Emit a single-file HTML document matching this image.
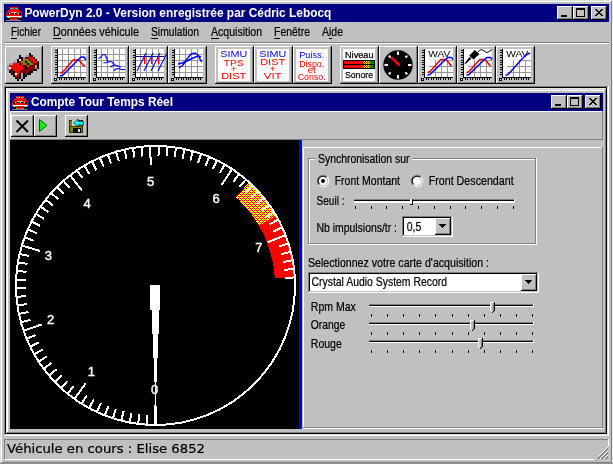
<!DOCTYPE html><html lang="fr"><head><meta charset="utf-8"><title>PowerDyn 2.0 - Compte Tour Temps Réel</title>
<style>html,body{margin:0;padding:0;background:#c0c0c0;overflow:hidden}svg{display:block;will-change:transform}text{white-space:pre}</style></head><body>
<svg width="613" height="464" viewBox="0 0 613 464" font-family="'Liberation Sans', sans-serif">
<defs><pattern id="dith" width="4" height="4" patternUnits="userSpaceOnUse"><rect width="4" height="4" fill="#ffff00"/><rect x="0" y="0" width="1" height="1" fill="#ff0000"/><rect x="2" y="0" width="1" height="1" fill="#ff0000"/><rect x="3" y="1" width="1" height="1" fill="#ff0000"/><rect x="0" y="2" width="1" height="1" fill="#ff0000"/><rect x="2" y="2" width="1" height="1" fill="#ff0000"/><rect x="1" y="3" width="1" height="1" fill="#ff0000"/></pattern><pattern id="dith2" width="2" height="2" patternUnits="userSpaceOnUse"><rect width="2" height="2" fill="#ffff00"/><rect width="1" height="1" fill="#ff0000"/><rect x="1" y="1" width="1" height="1" fill="#ff0000"/></pattern></defs>
<g id="main-window">
<g shape-rendering="crispEdges">
<rect x="0" y="0" width="613" height="464" fill="#c0c0c0"/>
<rect x="0" y="0" width="613" height="1" fill="#dfdfdf"/>
<rect x="0" y="0" width="1" height="464" fill="#dfdfdf"/>
<rect x="1" y="1" width="611" height="1" fill="#ffffff"/>
<rect x="1" y="1" width="1" height="462" fill="#ffffff"/>
<rect x="611" y="1" width="1" height="462" fill="#808080"/>
<rect x="1" y="462" width="611" height="1" fill="#808080"/>
<rect x="612" y="0" width="1" height="464" fill="#e8e8e8"/>
<rect x="0" y="463" width="613" height="1" fill="#909090"/>
<rect x="4" y="4" width="605" height="18" fill="#000080"/>
</g>
<g shape-rendering="crispEdges">
<rect x="10" y="7" width="8" height="1" fill="#ff0000"/>
<rect x="10" y="8" width="4" height="1" fill="#80a0a0"/>
<rect x="14" y="8" width="1" height="1" fill="#008000"/>
<rect x="15" y="8" width="3" height="1" fill="#80a0a0"/>
<rect x="9" y="9" width="10" height="1" fill="#ff0000"/>
<rect x="8" y="10" width="2" height="1" fill="#ff0000"/>
<rect x="10" y="10" width="1" height="1" fill="#c00000"/>
<rect x="11" y="10" width="9" height="1" fill="#ff0000"/>
<rect x="7" y="11" width="2" height="1" fill="#ff0000"/>
<rect x="9" y="11" width="1" height="1" fill="#c00000"/>
<rect x="10" y="11" width="11" height="1" fill="#ff0000"/>
<rect x="7" y="12" width="1" height="1" fill="#ff0000"/>
<rect x="8" y="12" width="1" height="1" fill="#c00000"/>
<rect x="9" y="12" width="2" height="1" fill="#ff0000"/>
<rect x="11" y="12" width="6" height="1" fill="#c0c0c0"/>
<rect x="17" y="12" width="4" height="1" fill="#ff0000"/>
<rect x="6" y="13" width="1" height="1" fill="#ff0000"/>
<rect x="7" y="13" width="2" height="1" fill="#000000"/>
<rect x="9" y="13" width="1" height="1" fill="#ffffff"/>
<rect x="10" y="13" width="1" height="1" fill="#ff0000"/>
<rect x="11" y="13" width="3" height="1" fill="#000000"/>
<rect x="14" y="13" width="1" height="1" fill="#ffffff"/>
<rect x="15" y="13" width="2" height="1" fill="#000000"/>
<rect x="17" y="13" width="1" height="1" fill="#ff0000"/>
<rect x="18" y="13" width="1" height="1" fill="#ffffff"/>
<rect x="19" y="13" width="2" height="1" fill="#000000"/>
<rect x="21" y="13" width="1" height="1" fill="#ff0000"/>
<rect x="6" y="14" width="1" height="1" fill="#ff0000"/>
<rect x="7" y="14" width="2" height="1" fill="#000000"/>
<rect x="9" y="14" width="10" height="1" fill="#ff0000"/>
<rect x="19" y="14" width="2" height="1" fill="#000000"/>
<rect x="21" y="14" width="1" height="1" fill="#ff0000"/>
<rect x="6" y="15" width="16" height="1" fill="#ff0000"/>
<rect x="6" y="16" width="1" height="1" fill="#00c0c0"/>
<rect x="7" y="16" width="14" height="1" fill="#ffffff"/>
<rect x="21" y="16" width="1" height="1" fill="#c0c0c0"/>
<rect x="7" y="17" width="1" height="1" fill="#808080"/>
<rect x="8" y="17" width="1" height="1" fill="#ffff00"/>
<rect x="9" y="17" width="1" height="1" fill="#808080"/>
<rect x="10" y="17" width="1" height="1" fill="#00c0c0"/>
<rect x="11" y="17" width="7" height="1" fill="#ff0000"/>
<rect x="18" y="17" width="1" height="1" fill="#808080"/>
<rect x="19" y="17" width="1" height="1" fill="#ffff00"/>
<rect x="20" y="17" width="2" height="1" fill="#808080"/>
<rect x="7" y="18" width="3" height="1" fill="#000000"/>
<rect x="10" y="18" width="8" height="1" fill="#c00000"/>
<rect x="18" y="18" width="3" height="1" fill="#000000"/>
<rect x="7" y="19" width="3" height="1" fill="#000000"/>
<rect x="10" y="19" width="2" height="1" fill="#808080"/>
<rect x="12" y="19" width="3" height="1" fill="#ff0000"/>
<rect x="15" y="19" width="3" height="1" fill="#808080"/>
<rect x="18" y="19" width="3" height="1" fill="#000000"/>
<rect x="6" y="20" width="15" height="1" fill="#808080"/>
</g>
<text x="24.4" y="16.7" font-size="13" fill="#ffffff" font-weight="bold" textLength="307" lengthAdjust="spacingAndGlyphs">PowerDyn 2.0 - Version enregistrée par Cédric Lebocq</text>
<g shape-rendering="crispEdges">
<rect x="557" y="6" width="16" height="14" fill="#c0c0c0"/>
<rect x="557" y="6" width="15" height="1" fill="#ffffff"/>
<rect x="557" y="6" width="1" height="13" fill="#ffffff"/>
<rect x="557" y="19" width="16" height="1" fill="#000000"/>
<rect x="572" y="6" width="1" height="14" fill="#000000"/>
<rect x="558" y="18" width="14" height="1" fill="#808080"/>
<rect x="571" y="7" width="1" height="12" fill="#808080"/>
<rect x="561" y="15" width="6" height="2" fill="#000000"/>
<rect x="573" y="6" width="16" height="14" fill="#c0c0c0"/>
<rect x="573" y="6" width="15" height="1" fill="#ffffff"/>
<rect x="573" y="6" width="1" height="13" fill="#ffffff"/>
<rect x="573" y="19" width="16" height="1" fill="#000000"/>
<rect x="588" y="6" width="1" height="14" fill="#000000"/>
<rect x="574" y="18" width="14" height="1" fill="#808080"/>
<rect x="587" y="7" width="1" height="12" fill="#808080"/>
<rect x="576" y="8" width="9" height="9" fill="#000000"/>
<rect x="577" y="10" width="7" height="6" fill="#c0c0c0"/>
<rect x="591" y="6" width="16" height="14" fill="#c0c0c0"/>
<rect x="591" y="6" width="15" height="1" fill="#ffffff"/>
<rect x="591" y="6" width="1" height="13" fill="#ffffff"/>
<rect x="591" y="19" width="16" height="1" fill="#000000"/>
<rect x="606" y="6" width="1" height="14" fill="#000000"/>
<rect x="592" y="18" width="14" height="1" fill="#808080"/>
<rect x="605" y="7" width="1" height="12" fill="#808080"/>
<rect x="595" y="9" width="2" height="1" fill="#000000"/>
<rect x="601" y="9" width="2" height="1" fill="#000000"/>
<rect x="596" y="10" width="2" height="1" fill="#000000"/>
<rect x="600" y="10" width="2" height="1" fill="#000000"/>
<rect x="597" y="11" width="2" height="1" fill="#000000"/>
<rect x="599" y="11" width="2" height="1" fill="#000000"/>
<rect x="598" y="12" width="2" height="1" fill="#000000"/>
<rect x="597" y="13" width="2" height="1" fill="#000000"/>
<rect x="599" y="13" width="2" height="1" fill="#000000"/>
<rect x="596" y="14" width="2" height="1" fill="#000000"/>
<rect x="600" y="14" width="2" height="1" fill="#000000"/>
<rect x="595" y="15" width="2" height="1" fill="#000000"/>
<rect x="601" y="15" width="2" height="1" fill="#000000"/>
</g>
<g id="menubar">
<text x="11" y="36" font-size="13" fill="#000" textLength="30" lengthAdjust="spacingAndGlyphs" stroke="#000" stroke-width="0.22">Fichier</text>
<rect x="11" y="38" width="6" height="1" fill="#000" shape-rendering="crispEdges"/>
<text x="53" y="36" font-size="13" fill="#000" textLength="86" lengthAdjust="spacingAndGlyphs" stroke="#000" stroke-width="0.22">Données véhicule</text>
<rect x="53" y="38" width="8" height="1" fill="#000" shape-rendering="crispEdges"/>
<text x="151" y="36" font-size="13" fill="#000" textLength="48" lengthAdjust="spacingAndGlyphs" stroke="#000" stroke-width="0.22">Simulation</text>
<rect x="151" y="38" width="7" height="1" fill="#000" shape-rendering="crispEdges"/>
<text x="211" y="36" font-size="13" fill="#000" textLength="51" lengthAdjust="spacingAndGlyphs" stroke="#000" stroke-width="0.22">Acquisition</text>
<rect x="211" y="38" width="8" height="1" fill="#000" shape-rendering="crispEdges"/>
<text x="274" y="36" font-size="13" fill="#000" textLength="36" lengthAdjust="spacingAndGlyphs" stroke="#000" stroke-width="0.22">Fenêtre</text>
<rect x="274" y="38" width="6" height="1" fill="#000" shape-rendering="crispEdges"/>
<text x="322" y="36" font-size="13" fill="#000" textLength="21" lengthAdjust="spacingAndGlyphs" stroke="#000" stroke-width="0.22">Aide</text>
<rect x="329" y="38" width="3" height="1" fill="#000" shape-rendering="crispEdges"/>
</g>
<g id="toolbar">
<g shape-rendering="crispEdges">
<rect x="4" y="42" width="605" height="1" fill="#808080"/>
<rect x="4" y="43" width="605" height="1" fill="#ffffff"/>
<rect x="5" y="46" width="38" height="38" fill="#c0c0c0"/>
<rect x="5" y="46" width="37" height="1" fill="#ffffff"/>
<rect x="5" y="46" width="1" height="37" fill="#ffffff"/>
<rect x="5" y="83" width="38" height="1" fill="#000000"/>
<rect x="42" y="46" width="1" height="38" fill="#000000"/>
<rect x="6" y="82" width="36" height="1" fill="#808080"/>
<rect x="41" y="47" width="1" height="36" fill="#808080"/>
<rect x="51" y="46" width="39" height="38" fill="#c0c0c0"/>
<rect x="51" y="46" width="38" height="1" fill="#ffffff"/>
<rect x="51" y="46" width="1" height="37" fill="#ffffff"/>
<rect x="51" y="83" width="39" height="1" fill="#000000"/>
<rect x="89" y="46" width="1" height="38" fill="#000000"/>
<rect x="52" y="82" width="37" height="1" fill="#808080"/>
<rect x="88" y="47" width="1" height="36" fill="#808080"/>
<rect x="90" y="46" width="39" height="38" fill="#c0c0c0"/>
<rect x="90" y="46" width="38" height="1" fill="#ffffff"/>
<rect x="90" y="46" width="1" height="37" fill="#ffffff"/>
<rect x="90" y="83" width="39" height="1" fill="#000000"/>
<rect x="128" y="46" width="1" height="38" fill="#000000"/>
<rect x="91" y="82" width="37" height="1" fill="#808080"/>
<rect x="127" y="47" width="1" height="36" fill="#808080"/>
<rect x="129" y="46" width="39" height="38" fill="#c0c0c0"/>
<rect x="129" y="46" width="38" height="1" fill="#ffffff"/>
<rect x="129" y="46" width="1" height="37" fill="#ffffff"/>
<rect x="129" y="83" width="39" height="1" fill="#000000"/>
<rect x="167" y="46" width="1" height="38" fill="#000000"/>
<rect x="130" y="82" width="37" height="1" fill="#808080"/>
<rect x="166" y="47" width="1" height="36" fill="#808080"/>
<rect x="168" y="46" width="39" height="38" fill="#c0c0c0"/>
<rect x="168" y="46" width="38" height="1" fill="#ffffff"/>
<rect x="168" y="46" width="1" height="37" fill="#ffffff"/>
<rect x="168" y="83" width="39" height="1" fill="#000000"/>
<rect x="206" y="46" width="1" height="38" fill="#000000"/>
<rect x="169" y="82" width="37" height="1" fill="#808080"/>
<rect x="205" y="47" width="1" height="36" fill="#808080"/>
<rect x="215" y="46" width="39" height="38" fill="#c0c0c0"/>
<rect x="215" y="46" width="38" height="1" fill="#ffffff"/>
<rect x="215" y="46" width="1" height="37" fill="#ffffff"/>
<rect x="215" y="83" width="39" height="1" fill="#000000"/>
<rect x="253" y="46" width="1" height="38" fill="#000000"/>
<rect x="216" y="82" width="37" height="1" fill="#808080"/>
<rect x="252" y="47" width="1" height="36" fill="#808080"/>
<rect x="254" y="46" width="39" height="38" fill="#c0c0c0"/>
<rect x="254" y="46" width="38" height="1" fill="#ffffff"/>
<rect x="254" y="46" width="1" height="37" fill="#ffffff"/>
<rect x="254" y="83" width="39" height="1" fill="#000000"/>
<rect x="292" y="46" width="1" height="38" fill="#000000"/>
<rect x="255" y="82" width="37" height="1" fill="#808080"/>
<rect x="291" y="47" width="1" height="36" fill="#808080"/>
<rect x="293" y="46" width="39" height="38" fill="#c0c0c0"/>
<rect x="293" y="46" width="38" height="1" fill="#ffffff"/>
<rect x="293" y="46" width="1" height="37" fill="#ffffff"/>
<rect x="293" y="83" width="39" height="1" fill="#000000"/>
<rect x="331" y="46" width="1" height="38" fill="#000000"/>
<rect x="294" y="82" width="37" height="1" fill="#808080"/>
<rect x="330" y="47" width="1" height="36" fill="#808080"/>
<rect x="340" y="46" width="39" height="38" fill="#c0c0c0"/>
<rect x="340" y="46" width="38" height="1" fill="#ffffff"/>
<rect x="340" y="46" width="1" height="37" fill="#ffffff"/>
<rect x="340" y="83" width="39" height="1" fill="#000000"/>
<rect x="378" y="46" width="1" height="38" fill="#000000"/>
<rect x="341" y="82" width="37" height="1" fill="#808080"/>
<rect x="377" y="47" width="1" height="36" fill="#808080"/>
<rect x="379" y="46" width="39" height="38" fill="#c0c0c0"/>
<rect x="379" y="46" width="38" height="1" fill="#ffffff"/>
<rect x="379" y="46" width="1" height="37" fill="#ffffff"/>
<rect x="379" y="83" width="39" height="1" fill="#000000"/>
<rect x="417" y="46" width="1" height="38" fill="#000000"/>
<rect x="380" y="82" width="37" height="1" fill="#808080"/>
<rect x="416" y="47" width="1" height="36" fill="#808080"/>
<rect x="418" y="46" width="39" height="38" fill="#c0c0c0"/>
<rect x="418" y="46" width="38" height="1" fill="#ffffff"/>
<rect x="418" y="46" width="1" height="37" fill="#ffffff"/>
<rect x="418" y="83" width="39" height="1" fill="#000000"/>
<rect x="456" y="46" width="1" height="38" fill="#000000"/>
<rect x="419" y="82" width="37" height="1" fill="#808080"/>
<rect x="455" y="47" width="1" height="36" fill="#808080"/>
<rect x="457" y="46" width="39" height="38" fill="#c0c0c0"/>
<rect x="457" y="46" width="38" height="1" fill="#ffffff"/>
<rect x="457" y="46" width="1" height="37" fill="#ffffff"/>
<rect x="457" y="83" width="39" height="1" fill="#000000"/>
<rect x="495" y="46" width="1" height="38" fill="#000000"/>
<rect x="458" y="82" width="37" height="1" fill="#808080"/>
<rect x="494" y="47" width="1" height="36" fill="#808080"/>
<rect x="496" y="46" width="39" height="38" fill="#c0c0c0"/>
<rect x="496" y="46" width="38" height="1" fill="#ffffff"/>
<rect x="496" y="46" width="1" height="37" fill="#ffffff"/>
<rect x="496" y="83" width="39" height="1" fill="#000000"/>
<rect x="534" y="46" width="1" height="38" fill="#000000"/>
<rect x="497" y="82" width="37" height="1" fill="#808080"/>
<rect x="533" y="47" width="1" height="36" fill="#808080"/>
</g>
<g shape-rendering="crispEdges">
<rect x="29" y="53" width="2" height="2" fill="#000000"/>
<rect x="19" y="55" width="2" height="2" fill="#000000"/>
<rect x="25" y="55" width="4" height="2" fill="#a0a0a0"/>
<rect x="29" y="55" width="2" height="2" fill="#800000"/>
<rect x="31" y="55" width="2" height="2" fill="#000000"/>
<rect x="19" y="57" width="4" height="2" fill="#000000"/>
<rect x="23" y="57" width="2" height="2" fill="#a0a0a0"/>
<rect x="25" y="57" width="4" height="2" fill="#800000"/>
<rect x="29" y="57" width="4" height="2" fill="#ff0000"/>
<rect x="33" y="57" width="2" height="2" fill="#000000"/>
<rect x="17" y="59" width="2" height="2" fill="#000000"/>
<rect x="19" y="59" width="2" height="2" fill="#ffffff"/>
<rect x="21" y="59" width="2" height="2" fill="#800000"/>
<rect x="23" y="59" width="6" height="2" fill="#808000"/>
<rect x="29" y="59" width="2" height="2" fill="#800000"/>
<rect x="31" y="59" width="4" height="2" fill="#ff0000"/>
<rect x="35" y="59" width="2" height="2" fill="#000000"/>
<rect x="13" y="61" width="4" height="2" fill="#a0a0a0"/>
<rect x="17" y="61" width="2" height="2" fill="#000000"/>
<rect x="19" y="61" width="2" height="2" fill="#800000"/>
<rect x="21" y="61" width="4" height="2" fill="#808000"/>
<rect x="25" y="61" width="2" height="2" fill="#000000"/>
<rect x="27" y="61" width="4" height="2" fill="#808000"/>
<rect x="31" y="61" width="2" height="2" fill="#800000"/>
<rect x="33" y="61" width="4" height="2" fill="#ff0000"/>
<rect x="37" y="61" width="2" height="2" fill="#000000"/>
<rect x="9" y="63" width="4" height="2" fill="#a0a0a0"/>
<rect x="13" y="63" width="6" height="2" fill="#ff0000"/>
<rect x="19" y="63" width="2" height="2" fill="#000000"/>
<rect x="21" y="63" width="2" height="2" fill="#ff0000"/>
<rect x="23" y="63" width="4" height="2" fill="#808000"/>
<rect x="27" y="63" width="2" height="2" fill="#000000"/>
<rect x="29" y="63" width="4" height="2" fill="#808000"/>
<rect x="33" y="63" width="4" height="2" fill="#800000"/>
<rect x="37" y="63" width="2" height="2" fill="#000000"/>
<rect x="7" y="65" width="2" height="2" fill="#a0a0a0"/>
<rect x="9" y="65" width="14" height="2" fill="#ff0000"/>
<rect x="23" y="65" width="2" height="2" fill="#000000"/>
<rect x="25" y="65" width="2" height="2" fill="#800000"/>
<rect x="27" y="65" width="2" height="2" fill="#808000"/>
<rect x="29" y="65" width="6" height="2" fill="#800000"/>
<rect x="35" y="65" width="2" height="2" fill="#a0a0a0"/>
<rect x="37" y="65" width="2" height="2" fill="#000000"/>
<rect x="7" y="67" width="2" height="2" fill="#a0a0a0"/>
<rect x="9" y="67" width="2" height="2" fill="#ffffff"/>
<rect x="11" y="67" width="12" height="2" fill="#ff0000"/>
<rect x="23" y="67" width="2" height="2" fill="#800000"/>
<rect x="25" y="67" width="2" height="2" fill="#000000"/>
<rect x="27" y="67" width="8" height="2" fill="#800000"/>
<rect x="35" y="67" width="2" height="2" fill="#a0a0a0"/>
<rect x="37" y="67" width="2" height="2" fill="#000000"/>
<rect x="7" y="69" width="2" height="2" fill="#a0a0a0"/>
<rect x="9" y="69" width="2" height="2" fill="#ff0000"/>
<rect x="11" y="69" width="2" height="2" fill="#000000"/>
<rect x="13" y="69" width="8" height="2" fill="#ff0000"/>
<rect x="21" y="69" width="12" height="2" fill="#800000"/>
<rect x="33" y="69" width="4" height="2" fill="#000000"/>
<rect x="9" y="71" width="2" height="2" fill="#000000"/>
<rect x="11" y="71" width="2" height="2" fill="#800000"/>
<rect x="13" y="71" width="2" height="2" fill="#000000"/>
<rect x="15" y="71" width="4" height="2" fill="#ff0000"/>
<rect x="19" y="71" width="10" height="2" fill="#800000"/>
<rect x="29" y="71" width="4" height="2" fill="#000000"/>
<rect x="11" y="73" width="2" height="2" fill="#000000"/>
<rect x="13" y="73" width="2" height="2" fill="#800000"/>
<rect x="15" y="73" width="2" height="2" fill="#ffffff"/>
<rect x="17" y="73" width="2" height="2" fill="#ff0000"/>
<rect x="19" y="73" width="2" height="2" fill="#000000"/>
<rect x="21" y="73" width="2" height="2" fill="#a0a0a0"/>
<rect x="23" y="73" width="2" height="2" fill="#000000"/>
<rect x="25" y="73" width="2" height="2" fill="#800000"/>
<rect x="27" y="73" width="4" height="2" fill="#000000"/>
<rect x="13" y="75" width="2" height="2" fill="#000000"/>
<rect x="15" y="75" width="2" height="2" fill="#ff0000"/>
<rect x="17" y="75" width="2" height="2" fill="#800000"/>
<rect x="19" y="75" width="2" height="2" fill="#000000"/>
<rect x="21" y="75" width="2" height="2" fill="#a0a0a0"/>
<rect x="23" y="75" width="4" height="2" fill="#000000"/>
<rect x="15" y="77" width="2" height="2" fill="#000000"/>
<rect x="17" y="77" width="2" height="2" fill="#800000"/>
<rect x="19" y="77" width="2" height="2" fill="#000000"/>
<rect x="21" y="77" width="2" height="2" fill="#a0a0a0"/>
<rect x="23" y="77" width="2" height="2" fill="#000000"/>
<rect x="17" y="79" width="2" height="2" fill="#000000"/>
<rect x="21" y="79" width="2" height="2" fill="#000000"/>
</g>
<g shape-rendering="crispEdges">
<rect x="58" y="49" width="28" height="28" fill="#ffffff"/>
<rect x="62" y="49" width="1" height="28" fill="#989898"/>
<rect x="68" y="49" width="1" height="28" fill="#989898"/>
<rect x="74" y="49" width="1" height="28" fill="#989898"/>
<rect x="80" y="49" width="1" height="28" fill="#989898"/>
<rect x="58" y="54" width="28" height="1" fill="#989898"/>
<rect x="58" y="60" width="28" height="1" fill="#989898"/>
<rect x="58" y="66" width="28" height="1" fill="#989898"/>
<rect x="58" y="72" width="28" height="1" fill="#989898"/>
<rect x="57" y="49" width="1" height="29" fill="#000000"/>
<rect x="57" y="77" width="29" height="1" fill="#000000"/>
<rect x="55" y="50" width="2" height="1" fill="#000000"/>
<rect x="55" y="52" width="2" height="1" fill="#000000"/>
<rect x="55" y="55" width="2" height="1" fill="#000000"/>
<rect x="55" y="57" width="2" height="1" fill="#000000"/>
<rect x="55" y="60" width="2" height="1" fill="#000000"/>
<rect x="55" y="62" width="2" height="1" fill="#000000"/>
<rect x="55" y="64" width="2" height="1" fill="#000000"/>
<rect x="55" y="67" width="2" height="1" fill="#000000"/>
<rect x="55" y="69" width="2" height="1" fill="#000000"/>
<rect x="55" y="72" width="2" height="1" fill="#000000"/>
<rect x="55" y="74" width="2" height="1" fill="#000000"/>
<rect x="59" y="78" width="1" height="2" fill="#000000"/>
<rect x="61" y="78" width="1" height="2" fill="#000000"/>
<rect x="64" y="78" width="1" height="2" fill="#000000"/>
<rect x="66" y="78" width="1" height="2" fill="#000000"/>
<rect x="69" y="78" width="1" height="2" fill="#000000"/>
<rect x="71" y="78" width="1" height="2" fill="#000000"/>
<rect x="73" y="78" width="1" height="2" fill="#000000"/>
<rect x="76" y="78" width="1" height="2" fill="#000000"/>
<rect x="78" y="78" width="1" height="2" fill="#000000"/>
<rect x="81" y="78" width="1" height="2" fill="#000000"/>
<rect x="83" y="78" width="1" height="2" fill="#000000"/>
<rect x="54" y="78" width="3" height="3" fill="#000000"/>
<rect x="55" y="79" width="1" height="1" fill="#ffffff"/>
</g>
<polyline points="60,73 63,72 73,60 79,60 83,65 85,66" fill="none" stroke="#ff0000" stroke-width="1.5" stroke-linejoin="round"/>
<polyline points="60,76 63,75 78,60 81,57 84,57 86,60" fill="none" stroke="#0000ff" stroke-width="1.5" stroke-linejoin="round"/>
<g shape-rendering="crispEdges">
<rect x="97" y="49" width="28" height="28" fill="#ffffff"/>
<rect x="101" y="49" width="1" height="28" fill="#989898"/>
<rect x="107" y="49" width="1" height="28" fill="#989898"/>
<rect x="113" y="49" width="1" height="28" fill="#989898"/>
<rect x="119" y="49" width="1" height="28" fill="#989898"/>
<rect x="97" y="54" width="28" height="1" fill="#989898"/>
<rect x="97" y="60" width="28" height="1" fill="#989898"/>
<rect x="97" y="66" width="28" height="1" fill="#989898"/>
<rect x="97" y="72" width="28" height="1" fill="#989898"/>
<rect x="96" y="49" width="1" height="29" fill="#000000"/>
<rect x="96" y="77" width="29" height="1" fill="#000000"/>
<rect x="94" y="50" width="2" height="1" fill="#000000"/>
<rect x="94" y="52" width="2" height="1" fill="#000000"/>
<rect x="94" y="55" width="2" height="1" fill="#000000"/>
<rect x="94" y="57" width="2" height="1" fill="#000000"/>
<rect x="94" y="60" width="2" height="1" fill="#000000"/>
<rect x="94" y="62" width="2" height="1" fill="#000000"/>
<rect x="94" y="64" width="2" height="1" fill="#000000"/>
<rect x="94" y="67" width="2" height="1" fill="#000000"/>
<rect x="94" y="69" width="2" height="1" fill="#000000"/>
<rect x="94" y="72" width="2" height="1" fill="#000000"/>
<rect x="94" y="74" width="2" height="1" fill="#000000"/>
<rect x="98" y="78" width="1" height="2" fill="#000000"/>
<rect x="100" y="78" width="1" height="2" fill="#000000"/>
<rect x="103" y="78" width="1" height="2" fill="#000000"/>
<rect x="105" y="78" width="1" height="2" fill="#000000"/>
<rect x="108" y="78" width="1" height="2" fill="#000000"/>
<rect x="110" y="78" width="1" height="2" fill="#000000"/>
<rect x="112" y="78" width="1" height="2" fill="#000000"/>
<rect x="115" y="78" width="1" height="2" fill="#000000"/>
<rect x="117" y="78" width="1" height="2" fill="#000000"/>
<rect x="120" y="78" width="1" height="2" fill="#000000"/>
<rect x="122" y="78" width="1" height="2" fill="#000000"/>
<rect x="93" y="78" width="3" height="3" fill="#000000"/>
<rect x="94" y="79" width="1" height="1" fill="#ffffff"/>
</g>
<polyline points="98.5,58.5 101,57 103,54.5 105,54.5 107,59 107.5,62" fill="none" stroke="#0000ff" stroke-width="1.2" stroke-linejoin="round"/>
<polyline points="103.5,63 107,62.5 110,61.5 112,62 114,64 115,64.5" fill="none" stroke="#0000ff" stroke-width="1.2" stroke-linejoin="round"/>
<polyline points="110,67 112,66 114,65 117,65.5 119,66.5 121,67" fill="none" stroke="#0000ff" stroke-width="1.2" stroke-linejoin="round"/>
<polyline points="114,70.5 116,69 119,68.5 121,69.5 125,69.5" fill="none" stroke="#0000ff" stroke-width="1.2" stroke-linejoin="round"/>
<g shape-rendering="crispEdges">
<rect x="136" y="49" width="28" height="28" fill="#ffffff"/>
<rect x="140" y="49" width="1" height="28" fill="#989898"/>
<rect x="146" y="49" width="1" height="28" fill="#989898"/>
<rect x="152" y="49" width="1" height="28" fill="#989898"/>
<rect x="158" y="49" width="1" height="28" fill="#989898"/>
<rect x="136" y="54" width="28" height="1" fill="#989898"/>
<rect x="136" y="60" width="28" height="1" fill="#989898"/>
<rect x="136" y="66" width="28" height="1" fill="#989898"/>
<rect x="136" y="72" width="28" height="1" fill="#989898"/>
<rect x="135" y="49" width="1" height="29" fill="#000000"/>
<rect x="135" y="77" width="29" height="1" fill="#000000"/>
<rect x="133" y="50" width="2" height="1" fill="#000000"/>
<rect x="133" y="52" width="2" height="1" fill="#000000"/>
<rect x="133" y="55" width="2" height="1" fill="#000000"/>
<rect x="133" y="57" width="2" height="1" fill="#000000"/>
<rect x="133" y="60" width="2" height="1" fill="#000000"/>
<rect x="133" y="62" width="2" height="1" fill="#000000"/>
<rect x="133" y="64" width="2" height="1" fill="#000000"/>
<rect x="133" y="67" width="2" height="1" fill="#000000"/>
<rect x="133" y="69" width="2" height="1" fill="#000000"/>
<rect x="133" y="72" width="2" height="1" fill="#000000"/>
<rect x="133" y="74" width="2" height="1" fill="#000000"/>
<rect x="137" y="78" width="1" height="2" fill="#000000"/>
<rect x="139" y="78" width="1" height="2" fill="#000000"/>
<rect x="142" y="78" width="1" height="2" fill="#000000"/>
<rect x="144" y="78" width="1" height="2" fill="#000000"/>
<rect x="147" y="78" width="1" height="2" fill="#000000"/>
<rect x="149" y="78" width="1" height="2" fill="#000000"/>
<rect x="151" y="78" width="1" height="2" fill="#000000"/>
<rect x="154" y="78" width="1" height="2" fill="#000000"/>
<rect x="156" y="78" width="1" height="2" fill="#000000"/>
<rect x="159" y="78" width="1" height="2" fill="#000000"/>
<rect x="161" y="78" width="1" height="2" fill="#000000"/>
<rect x="132" y="78" width="3" height="3" fill="#000000"/>
<rect x="133" y="79" width="1" height="1" fill="#ffffff"/>
</g>
<rect x="136" y="56" width="28" height="1" fill="#000080" shape-rendering="crispEdges"/>
<polyline points="137,71 146,53" fill="none" stroke="#0000ff" stroke-width="1.1" stroke-linejoin="round"/>
<polyline points="144,71 153,53" fill="none" stroke="#0000ff" stroke-width="1.1" stroke-linejoin="round"/>
<polyline points="151,71 160,53" fill="none" stroke="#0000ff" stroke-width="1.1" stroke-linejoin="round"/>
<polyline points="158,71 167,53" fill="none" stroke="#0000ff" stroke-width="1.1" stroke-linejoin="round"/>
<rect x="144" y="57" width="1.5" height="7" fill="#ff0000"/>
<rect x="151" y="57" width="1.5" height="7" fill="#ff0000"/>
<rect x="158" y="57" width="1.5" height="7" fill="#ff0000"/>
<g shape-rendering="crispEdges">
<rect x="175" y="49" width="28" height="28" fill="#ffffff"/>
<rect x="179" y="49" width="1" height="28" fill="#989898"/>
<rect x="185" y="49" width="1" height="28" fill="#989898"/>
<rect x="191" y="49" width="1" height="28" fill="#989898"/>
<rect x="197" y="49" width="1" height="28" fill="#989898"/>
<rect x="175" y="54" width="28" height="1" fill="#989898"/>
<rect x="175" y="60" width="28" height="1" fill="#989898"/>
<rect x="175" y="66" width="28" height="1" fill="#989898"/>
<rect x="175" y="72" width="28" height="1" fill="#989898"/>
<rect x="174" y="49" width="1" height="29" fill="#000000"/>
<rect x="174" y="77" width="29" height="1" fill="#000000"/>
<rect x="172" y="50" width="2" height="1" fill="#000000"/>
<rect x="172" y="52" width="2" height="1" fill="#000000"/>
<rect x="172" y="55" width="2" height="1" fill="#000000"/>
<rect x="172" y="57" width="2" height="1" fill="#000000"/>
<rect x="172" y="60" width="2" height="1" fill="#000000"/>
<rect x="172" y="62" width="2" height="1" fill="#000000"/>
<rect x="172" y="64" width="2" height="1" fill="#000000"/>
<rect x="172" y="67" width="2" height="1" fill="#000000"/>
<rect x="172" y="69" width="2" height="1" fill="#000000"/>
<rect x="172" y="72" width="2" height="1" fill="#000000"/>
<rect x="172" y="74" width="2" height="1" fill="#000000"/>
<rect x="176" y="78" width="1" height="2" fill="#000000"/>
<rect x="178" y="78" width="1" height="2" fill="#000000"/>
<rect x="181" y="78" width="1" height="2" fill="#000000"/>
<rect x="183" y="78" width="1" height="2" fill="#000000"/>
<rect x="186" y="78" width="1" height="2" fill="#000000"/>
<rect x="188" y="78" width="1" height="2" fill="#000000"/>
<rect x="190" y="78" width="1" height="2" fill="#000000"/>
<rect x="193" y="78" width="1" height="2" fill="#000000"/>
<rect x="195" y="78" width="1" height="2" fill="#000000"/>
<rect x="198" y="78" width="1" height="2" fill="#000000"/>
<rect x="200" y="78" width="1" height="2" fill="#000000"/>
<rect x="171" y="78" width="3" height="3" fill="#000000"/>
<rect x="172" y="79" width="1" height="1" fill="#ffffff"/>
</g>
<polyline points="179,68 183,65 187,59 191,54 195,53 198,55 201,61 202,62" fill="none" stroke="#0000ff" stroke-width="1.4" stroke-linejoin="round"/>
<polyline points="178,64 182,63 187,61 193,58 198,56 201,57" fill="none" stroke="#0000ff" stroke-width="1.4" stroke-linejoin="round"/>
<rect x="218" y="49" width="32" height="32" fill="#ffffff" shape-rendering="crispEdges"/>
<text x="220.2" y="57" font-size="9.8" fill="#0000ff" textLength="27" lengthAdjust="spacingAndGlyphs">SIMU</text>
<text x="223.7" y="65.5" font-size="9.8" fill="#ff0000" textLength="20" lengthAdjust="spacingAndGlyphs">TPS</text>
<text x="230.7" y="72" font-size="9.8" fill="#ff0000" textLength="6" lengthAdjust="spacingAndGlyphs">+</text>
<text x="221.2" y="79" font-size="9.8" fill="#ff0000" textLength="25" lengthAdjust="spacingAndGlyphs">DIST</text>
<rect x="257" y="49" width="32" height="32" fill="#ffffff" shape-rendering="crispEdges"/>
<text x="259.2" y="57" font-size="9.8" fill="#0000ff" textLength="27" lengthAdjust="spacingAndGlyphs">SIMU</text>
<text x="260.2" y="64.5" font-size="9.8" fill="#ff0000" textLength="25" lengthAdjust="spacingAndGlyphs">DIST</text>
<text x="269.7" y="72" font-size="9.8" fill="#ff0000" textLength="6" lengthAdjust="spacingAndGlyphs">+</text>
<text x="263.7" y="79" font-size="9.8" fill="#ff0000" textLength="18" lengthAdjust="spacingAndGlyphs">VIT</text>
<rect x="296" y="49" width="32" height="32" fill="#ffffff" shape-rendering="crispEdges"/>
<text x="299.2" y="57.5" font-size="9.8" fill="#0000ff" textLength="25" lengthAdjust="spacingAndGlyphs">Puiss.</text>
<text x="299.2" y="66.5" font-size="9.8" fill="#ff0000" textLength="25" lengthAdjust="spacingAndGlyphs">Dispo.</text>
<text x="307.7" y="72.5" font-size="9.8" fill="#ff0000" textLength="8" lengthAdjust="spacingAndGlyphs">et</text>
<text x="297.7" y="79.5" font-size="9.8" fill="#ff0000" textLength="28" lengthAdjust="spacingAndGlyphs">Conso.</text>
<g shape-rendering="crispEdges">
<rect x="343" y="49" width="32" height="32" fill="#ffffff"/>
<rect x="343" y="60" width="32" height="9" fill="#000000"/>
<rect x="344" y="61" width="19" height="3" fill="#ff0000"/>
<rect x="344" y="65" width="19" height="3" fill="#ff0000"/>
<rect x="363" y="61" width="7" height="3" fill="url(#dith2)"/>
<rect x="363" y="65" width="7" height="3" fill="url(#dith2)"/>
<rect x="370" y="61" width="4" height="3" fill="#008000"/>
<rect x="370" y="65" width="4" height="3" fill="#008000"/>
</g>
<text x="345" y="57.5" font-size="9.5" fill="#000" textLength="28.5" lengthAdjust="spacingAndGlyphs" stroke="#000" stroke-width="0.25">Niveau</text>
<text x="345" y="77.5" font-size="9.5" fill="#000" textLength="28" lengthAdjust="spacingAndGlyphs" stroke="#000" stroke-width="0.25">Sonore</text>
<circle cx="398" cy="65" r="14.7" fill="#000"/>
<line x1="398.0" y1="55.0" x2="398.0" y2="51.5" stroke="#fff" stroke-width="2"/>
<line x1="405.4" y1="57.6" x2="407.2" y2="55.8" stroke="#fff" stroke-width="2"/>
<line x1="408.0" y1="65.0" x2="411.5" y2="65.0" stroke="#fff" stroke-width="2"/>
<line x1="405.4" y1="72.4" x2="407.2" y2="74.2" stroke="#fff" stroke-width="2"/>
<line x1="398.0" y1="75.0" x2="398.0" y2="78.5" stroke="#fff" stroke-width="2"/>
<line x1="390.6" y1="72.4" x2="388.8" y2="74.2" stroke="#fff" stroke-width="2"/>
<line x1="388.0" y1="65.0" x2="384.5" y2="65.0" stroke="#fff" stroke-width="2"/>
<line x1="390.6" y1="57.6" x2="388.8" y2="55.8" stroke="#fff" stroke-width="2"/>
<line x1="399.5" y1="65.5" x2="391.5" y2="57.5" stroke="#ff0000" stroke-width="2.5"/>
<g shape-rendering="crispEdges">
<rect x="425" y="49" width="28" height="28" fill="#ffffff"/>
<rect x="435" y="60" width="1" height="17" fill="#989898"/>
<rect x="441" y="60" width="1" height="17" fill="#989898"/>
<rect x="447" y="60" width="1" height="17" fill="#989898"/>
<rect x="429" y="66" width="24" height="1" fill="#989898"/>
<rect x="429" y="72" width="24" height="1" fill="#989898"/>
<rect x="441" y="60" width="12" height="1" fill="#989898"/>
<rect x="424" y="49" width="1" height="29" fill="#000000"/>
<rect x="424" y="77" width="29" height="1" fill="#000000"/>
<rect x="422" y="50" width="2" height="1" fill="#000000"/>
<rect x="422" y="52" width="2" height="1" fill="#000000"/>
<rect x="422" y="55" width="2" height="1" fill="#000000"/>
<rect x="422" y="57" width="2" height="1" fill="#000000"/>
<rect x="422" y="60" width="2" height="1" fill="#000000"/>
<rect x="422" y="62" width="2" height="1" fill="#000000"/>
<rect x="422" y="64" width="2" height="1" fill="#000000"/>
<rect x="422" y="67" width="2" height="1" fill="#000000"/>
<rect x="422" y="69" width="2" height="1" fill="#000000"/>
<rect x="422" y="72" width="2" height="1" fill="#000000"/>
<rect x="422" y="74" width="2" height="1" fill="#000000"/>
<rect x="426" y="78" width="1" height="2" fill="#000000"/>
<rect x="428" y="78" width="1" height="2" fill="#000000"/>
<rect x="431" y="78" width="1" height="2" fill="#000000"/>
<rect x="433" y="78" width="1" height="2" fill="#000000"/>
<rect x="436" y="78" width="1" height="2" fill="#000000"/>
<rect x="438" y="78" width="1" height="2" fill="#000000"/>
<rect x="440" y="78" width="1" height="2" fill="#000000"/>
<rect x="443" y="78" width="1" height="2" fill="#000000"/>
<rect x="445" y="78" width="1" height="2" fill="#000000"/>
<rect x="448" y="78" width="1" height="2" fill="#000000"/>
<rect x="450" y="78" width="1" height="2" fill="#000000"/>
<rect x="421" y="78" width="3" height="3" fill="#000000"/>
<rect x="422" y="79" width="1" height="1" fill="#ffffff"/>
</g>
<text x="428.3" y="56.7" font-size="9.5" fill="#000" textLength="22" lengthAdjust="spacingAndGlyphs">WAV</text>
<polyline points="427.4,72.7 430,71.5 440.7,59.4 446,59.4 449,63 451.4,66" fill="none" stroke="#ff0000" stroke-width="1.5" stroke-linejoin="round"/>
<polyline points="427.4,75.4 430,74.5 445,60 448,57.4 451.4,57.4 453,59.5" fill="none" stroke="#0000ff" stroke-width="1.5" stroke-linejoin="round"/>
<g shape-rendering="crispEdges">
<rect x="464" y="49" width="28" height="28" fill="#ffffff"/>
<rect x="474" y="60" width="1" height="17" fill="#989898"/>
<rect x="480" y="60" width="1" height="17" fill="#989898"/>
<rect x="486" y="60" width="1" height="17" fill="#989898"/>
<rect x="468" y="66" width="24" height="1" fill="#989898"/>
<rect x="468" y="72" width="24" height="1" fill="#989898"/>
<rect x="480" y="60" width="12" height="1" fill="#989898"/>
<rect x="463" y="49" width="1" height="29" fill="#000000"/>
<rect x="463" y="77" width="29" height="1" fill="#000000"/>
<rect x="461" y="50" width="2" height="1" fill="#000000"/>
<rect x="461" y="52" width="2" height="1" fill="#000000"/>
<rect x="461" y="55" width="2" height="1" fill="#000000"/>
<rect x="461" y="57" width="2" height="1" fill="#000000"/>
<rect x="461" y="60" width="2" height="1" fill="#000000"/>
<rect x="461" y="62" width="2" height="1" fill="#000000"/>
<rect x="461" y="64" width="2" height="1" fill="#000000"/>
<rect x="461" y="67" width="2" height="1" fill="#000000"/>
<rect x="461" y="69" width="2" height="1" fill="#000000"/>
<rect x="461" y="72" width="2" height="1" fill="#000000"/>
<rect x="461" y="74" width="2" height="1" fill="#000000"/>
<rect x="465" y="78" width="1" height="2" fill="#000000"/>
<rect x="467" y="78" width="1" height="2" fill="#000000"/>
<rect x="470" y="78" width="1" height="2" fill="#000000"/>
<rect x="472" y="78" width="1" height="2" fill="#000000"/>
<rect x="475" y="78" width="1" height="2" fill="#000000"/>
<rect x="477" y="78" width="1" height="2" fill="#000000"/>
<rect x="479" y="78" width="1" height="2" fill="#000000"/>
<rect x="482" y="78" width="1" height="2" fill="#000000"/>
<rect x="484" y="78" width="1" height="2" fill="#000000"/>
<rect x="487" y="78" width="1" height="2" fill="#000000"/>
<rect x="489" y="78" width="1" height="2" fill="#000000"/>
<rect x="460" y="78" width="3" height="3" fill="#000000"/>
<rect x="461" y="79" width="1" height="1" fill="#ffffff"/>
</g>
<g transform="translate(460,49)"><polygon points="14.8,1 19.5,5 13.5,10.4 9.2,6.8" fill="#000"/><polygon points="9.5,8 11.5,9.5 5.5,15 4.5,14.5" fill="#000"/><path d="M18 3 q3 -4 6 -1 t5 0.5 l3 -2" fill="none" stroke="#000" stroke-width="1"/></g>
<polyline points="466.4,72.7 469,71.5 479.7,59.4 485,59.4 488,63 490.4,66" fill="none" stroke="#ff0000" stroke-width="1.5" stroke-linejoin="round"/>
<polyline points="466.4,75.4 469,74.5 484,60 487,57.4 490.4,57.4 492,59.5" fill="none" stroke="#0000ff" stroke-width="1.5" stroke-linejoin="round"/>
<g shape-rendering="crispEdges">
<rect x="503" y="49" width="28" height="28" fill="#ffffff"/>
<rect x="513" y="60" width="1" height="17" fill="#989898"/>
<rect x="519" y="60" width="1" height="17" fill="#989898"/>
<rect x="525" y="60" width="1" height="17" fill="#989898"/>
<rect x="507" y="66" width="24" height="1" fill="#989898"/>
<rect x="507" y="72" width="24" height="1" fill="#989898"/>
<rect x="519" y="60" width="12" height="1" fill="#989898"/>
<rect x="502" y="49" width="1" height="29" fill="#000000"/>
<rect x="502" y="77" width="29" height="1" fill="#000000"/>
<rect x="500" y="50" width="2" height="1" fill="#000000"/>
<rect x="500" y="52" width="2" height="1" fill="#000000"/>
<rect x="500" y="55" width="2" height="1" fill="#000000"/>
<rect x="500" y="57" width="2" height="1" fill="#000000"/>
<rect x="500" y="60" width="2" height="1" fill="#000000"/>
<rect x="500" y="62" width="2" height="1" fill="#000000"/>
<rect x="500" y="64" width="2" height="1" fill="#000000"/>
<rect x="500" y="67" width="2" height="1" fill="#000000"/>
<rect x="500" y="69" width="2" height="1" fill="#000000"/>
<rect x="500" y="72" width="2" height="1" fill="#000000"/>
<rect x="500" y="74" width="2" height="1" fill="#000000"/>
<rect x="504" y="78" width="1" height="2" fill="#000000"/>
<rect x="506" y="78" width="1" height="2" fill="#000000"/>
<rect x="509" y="78" width="1" height="2" fill="#000000"/>
<rect x="511" y="78" width="1" height="2" fill="#000000"/>
<rect x="514" y="78" width="1" height="2" fill="#000000"/>
<rect x="516" y="78" width="1" height="2" fill="#000000"/>
<rect x="518" y="78" width="1" height="2" fill="#000000"/>
<rect x="521" y="78" width="1" height="2" fill="#000000"/>
<rect x="523" y="78" width="1" height="2" fill="#000000"/>
<rect x="526" y="78" width="1" height="2" fill="#000000"/>
<rect x="528" y="78" width="1" height="2" fill="#000000"/>
<rect x="499" y="78" width="3" height="3" fill="#000000"/>
<rect x="500" y="79" width="1" height="1" fill="#ffffff"/>
</g>
<text x="506.3" y="56.7" font-size="9.5" fill="#000" textLength="22" lengthAdjust="spacingAndGlyphs">WAV</text>
<polyline points="505.4,75.4 508,74.5 513,69 521,60 526,55 530,53" fill="none" stroke="#0000ff" stroke-width="1.5" stroke-linejoin="round"/>
</g>
</g>
<g id="mdi-client">
<g shape-rendering="crispEdges">
<rect x="4" y="86" width="605" height="1" fill="#808080"/>
<rect x="4" y="86" width="1" height="350" fill="#808080"/>
<rect x="5" y="87" width="603" height="1" fill="#000000"/>
<rect x="5" y="87" width="1" height="348" fill="#000000"/>
<rect x="5" y="434" width="604" height="1" fill="#dfdfdf"/>
<rect x="607" y="87" width="1" height="348" fill="#dfdfdf"/>
<rect x="4" y="435" width="605" height="1" fill="#ffffff"/>
<rect x="608" y="86" width="1" height="350" fill="#ffffff"/>
<rect x="6" y="88" width="601" height="346" fill="#c0c0c0"/>
<rect x="6" y="88" width="600" height="1" fill="#e8e8e8"/>
<rect x="6" y="89" width="600" height="1" fill="#d8d8d8"/>
<rect x="7" y="90" width="598" height="1" fill="#ffffff"/>
<rect x="6" y="88" width="1" height="345" fill="#e8e8e8"/>
<rect x="7" y="90" width="1" height="342" fill="#ffffff"/>
<rect x="606" y="88" width="1" height="346" fill="#000000"/>
<rect x="6" y="433" width="601" height="1" fill="#000000"/>
<rect x="605" y="89" width="1" height="344" fill="#808080"/>
<rect x="7" y="432" width="599" height="1" fill="#808080"/>
<rect x="10" y="93" width="593" height="18" fill="#000080"/>
</g>
<g shape-rendering="crispEdges">
<rect x="16" y="96" width="8" height="1" fill="#ff0000"/>
<rect x="16" y="97" width="4" height="1" fill="#80a0a0"/>
<rect x="20" y="97" width="1" height="1" fill="#008000"/>
<rect x="21" y="97" width="3" height="1" fill="#80a0a0"/>
<rect x="15" y="98" width="10" height="1" fill="#ff0000"/>
<rect x="14" y="99" width="2" height="1" fill="#ff0000"/>
<rect x="16" y="99" width="1" height="1" fill="#c00000"/>
<rect x="17" y="99" width="9" height="1" fill="#ff0000"/>
<rect x="13" y="100" width="2" height="1" fill="#ff0000"/>
<rect x="15" y="100" width="1" height="1" fill="#c00000"/>
<rect x="16" y="100" width="11" height="1" fill="#ff0000"/>
<rect x="13" y="101" width="1" height="1" fill="#ff0000"/>
<rect x="14" y="101" width="1" height="1" fill="#c00000"/>
<rect x="15" y="101" width="2" height="1" fill="#ff0000"/>
<rect x="17" y="101" width="6" height="1" fill="#c0c0c0"/>
<rect x="23" y="101" width="4" height="1" fill="#ff0000"/>
<rect x="12" y="102" width="1" height="1" fill="#ff0000"/>
<rect x="13" y="102" width="2" height="1" fill="#000000"/>
<rect x="15" y="102" width="1" height="1" fill="#ffffff"/>
<rect x="16" y="102" width="1" height="1" fill="#ff0000"/>
<rect x="17" y="102" width="3" height="1" fill="#000000"/>
<rect x="20" y="102" width="1" height="1" fill="#ffffff"/>
<rect x="21" y="102" width="2" height="1" fill="#000000"/>
<rect x="23" y="102" width="1" height="1" fill="#ff0000"/>
<rect x="24" y="102" width="1" height="1" fill="#ffffff"/>
<rect x="25" y="102" width="2" height="1" fill="#000000"/>
<rect x="27" y="102" width="1" height="1" fill="#ff0000"/>
<rect x="12" y="103" width="1" height="1" fill="#ff0000"/>
<rect x="13" y="103" width="2" height="1" fill="#000000"/>
<rect x="15" y="103" width="10" height="1" fill="#ff0000"/>
<rect x="25" y="103" width="2" height="1" fill="#000000"/>
<rect x="27" y="103" width="1" height="1" fill="#ff0000"/>
<rect x="12" y="104" width="16" height="1" fill="#ff0000"/>
<rect x="12" y="105" width="1" height="1" fill="#00c0c0"/>
<rect x="13" y="105" width="14" height="1" fill="#ffffff"/>
<rect x="27" y="105" width="1" height="1" fill="#c0c0c0"/>
<rect x="13" y="106" width="1" height="1" fill="#808080"/>
<rect x="14" y="106" width="1" height="1" fill="#ffff00"/>
<rect x="15" y="106" width="1" height="1" fill="#808080"/>
<rect x="16" y="106" width="1" height="1" fill="#00c0c0"/>
<rect x="17" y="106" width="7" height="1" fill="#ff0000"/>
<rect x="24" y="106" width="1" height="1" fill="#808080"/>
<rect x="25" y="106" width="1" height="1" fill="#ffff00"/>
<rect x="26" y="106" width="2" height="1" fill="#808080"/>
<rect x="13" y="107" width="3" height="1" fill="#000000"/>
<rect x="16" y="107" width="8" height="1" fill="#c00000"/>
<rect x="24" y="107" width="3" height="1" fill="#000000"/>
<rect x="13" y="108" width="3" height="1" fill="#000000"/>
<rect x="16" y="108" width="2" height="1" fill="#808080"/>
<rect x="18" y="108" width="3" height="1" fill="#ff0000"/>
<rect x="21" y="108" width="3" height="1" fill="#808080"/>
<rect x="24" y="108" width="3" height="1" fill="#000000"/>
<rect x="12" y="109" width="15" height="1" fill="#808080"/>
</g>
<text x="31" y="106" font-size="13" fill="#ffffff" font-weight="bold" textLength="142" lengthAdjust="spacingAndGlyphs">Compte Tour Temps Réel</text>
<g shape-rendering="crispEdges">
<rect x="551" y="95" width="16" height="14" fill="#c0c0c0"/>
<rect x="551" y="95" width="15" height="1" fill="#ffffff"/>
<rect x="551" y="95" width="1" height="13" fill="#ffffff"/>
<rect x="551" y="108" width="16" height="1" fill="#000000"/>
<rect x="566" y="95" width="1" height="14" fill="#000000"/>
<rect x="552" y="107" width="14" height="1" fill="#808080"/>
<rect x="565" y="96" width="1" height="12" fill="#808080"/>
<rect x="555" y="104" width="6" height="2" fill="#000000"/>
<rect x="567" y="95" width="16" height="14" fill="#c0c0c0"/>
<rect x="567" y="95" width="15" height="1" fill="#ffffff"/>
<rect x="567" y="95" width="1" height="13" fill="#ffffff"/>
<rect x="567" y="108" width="16" height="1" fill="#000000"/>
<rect x="582" y="95" width="1" height="14" fill="#000000"/>
<rect x="568" y="107" width="14" height="1" fill="#808080"/>
<rect x="581" y="96" width="1" height="12" fill="#808080"/>
<rect x="570" y="97" width="9" height="9" fill="#000000"/>
<rect x="571" y="99" width="7" height="6" fill="#c0c0c0"/>
<rect x="585" y="95" width="16" height="14" fill="#c0c0c0"/>
<rect x="585" y="95" width="15" height="1" fill="#ffffff"/>
<rect x="585" y="95" width="1" height="13" fill="#ffffff"/>
<rect x="585" y="108" width="16" height="1" fill="#000000"/>
<rect x="600" y="95" width="1" height="14" fill="#000000"/>
<rect x="586" y="107" width="14" height="1" fill="#808080"/>
<rect x="599" y="96" width="1" height="12" fill="#808080"/>
<rect x="589" y="98" width="2" height="1" fill="#000000"/>
<rect x="595" y="98" width="2" height="1" fill="#000000"/>
<rect x="590" y="99" width="2" height="1" fill="#000000"/>
<rect x="594" y="99" width="2" height="1" fill="#000000"/>
<rect x="591" y="100" width="2" height="1" fill="#000000"/>
<rect x="593" y="100" width="2" height="1" fill="#000000"/>
<rect x="592" y="101" width="2" height="1" fill="#000000"/>
<rect x="591" y="102" width="2" height="1" fill="#000000"/>
<rect x="593" y="102" width="2" height="1" fill="#000000"/>
<rect x="590" y="103" width="2" height="1" fill="#000000"/>
<rect x="594" y="103" width="2" height="1" fill="#000000"/>
<rect x="589" y="104" width="2" height="1" fill="#000000"/>
<rect x="595" y="104" width="2" height="1" fill="#000000"/>
<rect x="10" y="111" width="592" height="1" fill="#ffffff"/>
<rect x="10" y="111" width="1" height="28" fill="#ffffff"/>
<rect x="10" y="139" width="593" height="1" fill="#808080"/>
<rect x="602" y="111" width="1" height="29" fill="#808080"/>
<rect x="602" y="147" width="1" height="281" fill="#808080"/>
<rect x="11" y="115" width="23" height="22" fill="#c0c0c0"/>
<rect x="11" y="115" width="22" height="1" fill="#ffffff"/>
<rect x="11" y="115" width="1" height="21" fill="#ffffff"/>
<rect x="11" y="136" width="23" height="1" fill="#000000"/>
<rect x="33" y="115" width="1" height="22" fill="#000000"/>
<rect x="12" y="135" width="21" height="1" fill="#808080"/>
<rect x="32" y="116" width="1" height="20" fill="#808080"/>
<rect x="34" y="115" width="23" height="22" fill="#c0c0c0"/>
<rect x="34" y="115" width="22" height="1" fill="#ffffff"/>
<rect x="34" y="115" width="1" height="21" fill="#ffffff"/>
<rect x="34" y="136" width="23" height="1" fill="#000000"/>
<rect x="56" y="115" width="1" height="22" fill="#000000"/>
<rect x="35" y="135" width="21" height="1" fill="#808080"/>
<rect x="55" y="116" width="1" height="20" fill="#808080"/>
<rect x="65" y="115" width="23" height="22" fill="#c0c0c0"/>
<rect x="65" y="115" width="22" height="1" fill="#ffffff"/>
<rect x="65" y="115" width="1" height="21" fill="#ffffff"/>
<rect x="65" y="136" width="23" height="1" fill="#000000"/>
<rect x="87" y="115" width="1" height="22" fill="#000000"/>
<rect x="66" y="135" width="21" height="1" fill="#808080"/>
<rect x="86" y="116" width="1" height="20" fill="#808080"/>
</g>
<path d="M16.5 120.5 L28 132 M28 120.5 L16.5 132" stroke="#000" stroke-width="2" fill="none"/>
<polygon points="39.5,119.5 39.5,131.5 47,125.5" fill="#00ff00" stroke="#006000" stroke-width="1"/>
<g shape-rendering="crispEdges">
<rect x="69" y="120" width="14" height="13" fill="#303000"/>
<rect x="70" y="121" width="12" height="11" fill="#808000"/>
<rect x="72" y="120" width="6" height="6" fill="#d0d0d0"/>
<rect x="70" y="126" width="12" height="1" fill="#404000"/>
<rect x="73" y="128" width="8" height="5" fill="#000"/>
<rect x="78" y="129" width="2" height="3" fill="#e0e0e0"/>
</g>
<polygon points="73.5,123 78,119 78,121.3 83.5,121.3 83.5,125 78,125 78,127" fill="#00ffff" stroke="#000" stroke-width="0.6"/>
<g shape-rendering="crispEdges">
<rect x="10" y="140" width="289" height="289" fill="#000000"/>
<rect x="299" y="140" width="3" height="289" fill="#0000ff"/>
<rect x="303" y="147" width="299" height="1" fill="#ffffff"/>
<rect x="303" y="147" width="1" height="280" fill="#ffffff"/>
<rect x="303" y="427" width="300" height="1" fill="#808080"/>
<rect x="303" y="428" width="300" height="1" fill="#ffffff"/>
</g>
<g id="gauge">
<polygon points="248.9,182.6 250.2,183.8 251.5,185.0 252.8,186.3 254.1,187.5 255.4,188.8 256.6,190.1 257.8,191.4 259.0,192.8 260.2,194.1 261.4,195.5 262.5,196.8 263.7,198.2 264.8,199.6 265.9,201.1 267.0,202.5 268.1,203.9 269.1,205.4 270.1,206.9 271.1,208.4 272.1,209.9 273.1,211.4 274.0,212.9 275.0,214.4 275.9,216.0 259.0,225.7 258.2,224.4 257.4,223.1 256.6,221.8 255.8,220.5 254.9,219.2 254.0,217.9 253.2,216.6 252.3,215.4 251.3,214.1 250.4,212.9 249.5,211.7 248.5,210.5 247.5,209.3 246.5,208.1 245.5,206.9 244.5,205.8 243.5,204.6 242.4,203.5 241.3,202.4 240.3,201.3 239.2,200.2 238.1,199.1 236.9,198.0 235.8,197.0" fill="url(#dith)" shape-rendering="crispEdges"/>
<polygon points="275.9,216.0 277.2,218.3 278.5,220.7 279.7,223.1 280.9,225.5 282.0,228.0 283.1,230.4 284.2,232.9 285.2,235.4 286.1,238.0 287.0,240.5 287.9,243.1 288.7,245.6 289.4,248.2 290.1,250.8 290.8,253.4 291.3,256.1 291.9,258.7 292.4,261.4 292.8,264.0 293.2,266.7 293.6,269.4 293.8,272.0 294.1,274.7 294.3,277.4 274.8,278.5 274.6,276.2 274.4,273.9 274.2,271.6 273.9,269.3 273.6,267.0 273.2,264.7 272.8,262.5 272.3,260.2 271.8,257.9 271.2,255.7 270.6,253.4 270.0,251.2 269.3,249.0 268.6,246.8 267.8,244.6 267.0,242.5 266.1,240.3 265.2,238.2 264.3,236.0 263.3,233.9 262.3,231.9 261.2,229.8 260.1,227.8 259.0,225.7" fill="#ff0000" shape-rendering="crispEdges"/>
<circle cx="155.5" cy="285.5" r="139.5" fill="none" stroke="#fff" stroke-width="2" shape-rendering="crispEdges"/>
<line x1="155.5" y1="405.7" x2="155.5" y2="425.0" stroke="#fff" stroke-width="2" shape-rendering="crispEdges"/>
<line x1="147.5" y1="415.0" x2="146.8" y2="424.7" stroke="#fff" stroke-width="2" shape-rendering="crispEdges"/>
<line x1="139.4" y1="414.2" x2="138.2" y2="423.9" stroke="#fff" stroke-width="2" shape-rendering="crispEdges"/>
<line x1="131.5" y1="413.0" x2="129.7" y2="422.6" stroke="#fff" stroke-width="2" shape-rendering="crispEdges"/>
<line x1="123.6" y1="411.2" x2="121.2" y2="420.7" stroke="#fff" stroke-width="2" shape-rendering="crispEdges"/>
<line x1="115.9" y1="409.0" x2="112.9" y2="418.3" stroke="#fff" stroke-width="2" shape-rendering="crispEdges"/>
<line x1="108.3" y1="406.3" x2="104.8" y2="415.4" stroke="#fff" stroke-width="2" shape-rendering="crispEdges"/>
<line x1="100.9" y1="403.2" x2="96.8" y2="412.0" stroke="#fff" stroke-width="2" shape-rendering="crispEdges"/>
<line x1="93.7" y1="399.5" x2="89.1" y2="408.2" stroke="#fff" stroke-width="2" shape-rendering="crispEdges"/>
<line x1="86.8" y1="395.5" x2="81.6" y2="403.8" stroke="#fff" stroke-width="2" shape-rendering="crispEdges"/>
<line x1="85.6" y1="383.3" x2="74.4" y2="399.0" stroke="#fff" stroke-width="2" shape-rendering="crispEdges"/>
<line x1="73.7" y1="386.1" x2="67.5" y2="393.7" stroke="#fff" stroke-width="2" shape-rendering="crispEdges"/>
<line x1="67.6" y1="380.9" x2="61.0" y2="388.1" stroke="#fff" stroke-width="2" shape-rendering="crispEdges"/>
<line x1="61.9" y1="375.2" x2="54.8" y2="382.0" stroke="#fff" stroke-width="2" shape-rendering="crispEdges"/>
<line x1="56.5" y1="369.3" x2="49.0" y2="375.6" stroke="#fff" stroke-width="2" shape-rendering="crispEdges"/>
<line x1="51.5" y1="363.0" x2="43.6" y2="368.8" stroke="#fff" stroke-width="2" shape-rendering="crispEdges"/>
<line x1="46.9" y1="356.4" x2="38.7" y2="361.7" stroke="#fff" stroke-width="2" shape-rendering="crispEdges"/>
<line x1="42.7" y1="349.5" x2="34.2" y2="354.3" stroke="#fff" stroke-width="2" shape-rendering="crispEdges"/>
<line x1="38.9" y1="342.4" x2="30.1" y2="346.7" stroke="#fff" stroke-width="2" shape-rendering="crispEdges"/>
<line x1="35.6" y1="335.0" x2="26.6" y2="338.8" stroke="#fff" stroke-width="2" shape-rendering="crispEdges"/>
<line x1="41.8" y1="324.4" x2="23.5" y2="330.7" stroke="#fff" stroke-width="2" shape-rendering="crispEdges"/>
<line x1="30.4" y1="319.8" x2="21.0" y2="322.4" stroke="#fff" stroke-width="2" shape-rendering="crispEdges"/>
<line x1="28.5" y1="312.0" x2="18.9" y2="314.0" stroke="#fff" stroke-width="2" shape-rendering="crispEdges"/>
<line x1="27.1" y1="304.1" x2="17.4" y2="305.5" stroke="#fff" stroke-width="2" shape-rendering="crispEdges"/>
<line x1="26.2" y1="296.1" x2="16.5" y2="296.9" stroke="#fff" stroke-width="2" shape-rendering="crispEdges"/>
<line x1="25.8" y1="288.0" x2="16.0" y2="288.2" stroke="#fff" stroke-width="2" shape-rendering="crispEdges"/>
<line x1="25.9" y1="280.0" x2="16.1" y2="279.6" stroke="#fff" stroke-width="2" shape-rendering="crispEdges"/>
<line x1="26.5" y1="271.9" x2="16.8" y2="270.9" stroke="#fff" stroke-width="2" shape-rendering="crispEdges"/>
<line x1="27.6" y1="264.0" x2="17.9" y2="262.3" stroke="#fff" stroke-width="2" shape-rendering="crispEdges"/>
<line x1="29.2" y1="256.1" x2="19.6" y2="253.9" stroke="#fff" stroke-width="2" shape-rendering="crispEdges"/>
<line x1="40.3" y1="251.0" x2="21.9" y2="245.5" stroke="#fff" stroke-width="2" shape-rendering="crispEdges"/>
<line x1="33.8" y1="240.7" x2="24.6" y2="237.3" stroke="#fff" stroke-width="2" shape-rendering="crispEdges"/>
<line x1="36.8" y1="233.2" x2="27.8" y2="229.3" stroke="#fff" stroke-width="2" shape-rendering="crispEdges"/>
<line x1="40.3" y1="225.9" x2="31.6" y2="221.5" stroke="#fff" stroke-width="2" shape-rendering="crispEdges"/>
<line x1="44.2" y1="218.9" x2="35.8" y2="213.9" stroke="#fff" stroke-width="2" shape-rendering="crispEdges"/>
<line x1="48.5" y1="212.1" x2="40.5" y2="206.6" stroke="#fff" stroke-width="2" shape-rendering="crispEdges"/>
<line x1="53.3" y1="205.7" x2="45.6" y2="199.6" stroke="#fff" stroke-width="2" shape-rendering="crispEdges"/>
<line x1="58.4" y1="199.5" x2="51.1" y2="193.0" stroke="#fff" stroke-width="2" shape-rendering="crispEdges"/>
<line x1="64.0" y1="193.6" x2="57.0" y2="186.7" stroke="#fff" stroke-width="2" shape-rendering="crispEdges"/>
<line x1="69.8" y1="188.1" x2="63.4" y2="180.8" stroke="#fff" stroke-width="2" shape-rendering="crispEdges"/>
<line x1="81.9" y1="190.5" x2="70.0" y2="175.2" stroke="#fff" stroke-width="2" shape-rendering="crispEdges"/>
<line x1="82.6" y1="178.3" x2="77.0" y2="170.2" stroke="#fff" stroke-width="2" shape-rendering="crispEdges"/>
<line x1="89.3" y1="173.9" x2="84.3" y2="165.5" stroke="#fff" stroke-width="2" shape-rendering="crispEdges"/>
<line x1="96.4" y1="170.1" x2="91.9" y2="161.3" stroke="#fff" stroke-width="2" shape-rendering="crispEdges"/>
<line x1="103.7" y1="166.6" x2="99.7" y2="157.6" stroke="#fff" stroke-width="2" shape-rendering="crispEdges"/>
<line x1="111.1" y1="163.6" x2="107.8" y2="154.4" stroke="#fff" stroke-width="2" shape-rendering="crispEdges"/>
<line x1="118.8" y1="161.1" x2="116.0" y2="151.7" stroke="#fff" stroke-width="2" shape-rendering="crispEdges"/>
<line x1="126.6" y1="159.1" x2="124.4" y2="149.5" stroke="#fff" stroke-width="2" shape-rendering="crispEdges"/>
<line x1="134.5" y1="157.5" x2="132.9" y2="147.8" stroke="#fff" stroke-width="2" shape-rendering="crispEdges"/>
<line x1="142.4" y1="156.5" x2="141.4" y2="146.7" stroke="#fff" stroke-width="2" shape-rendering="crispEdges"/>
<line x1="150.8" y1="165.4" x2="150.1" y2="146.1" stroke="#fff" stroke-width="2" shape-rendering="crispEdges"/>
<line x1="158.5" y1="155.8" x2="158.7" y2="146.0" stroke="#fff" stroke-width="2" shape-rendering="crispEdges"/>
<line x1="166.5" y1="156.3" x2="167.4" y2="146.5" stroke="#fff" stroke-width="2" shape-rendering="crispEdges"/>
<line x1="174.5" y1="157.2" x2="176.0" y2="147.5" stroke="#fff" stroke-width="2" shape-rendering="crispEdges"/>
<line x1="182.5" y1="158.6" x2="184.5" y2="149.0" stroke="#fff" stroke-width="2" shape-rendering="crispEdges"/>
<line x1="190.3" y1="160.5" x2="192.9" y2="151.1" stroke="#fff" stroke-width="2" shape-rendering="crispEdges"/>
<line x1="198.0" y1="162.9" x2="201.2" y2="153.7" stroke="#fff" stroke-width="2" shape-rendering="crispEdges"/>
<line x1="205.5" y1="165.8" x2="209.3" y2="156.8" stroke="#fff" stroke-width="2" shape-rendering="crispEdges"/>
<line x1="212.8" y1="169.1" x2="217.1" y2="160.4" stroke="#fff" stroke-width="2" shape-rendering="crispEdges"/>
<line x1="219.9" y1="172.9" x2="224.8" y2="164.4" stroke="#fff" stroke-width="2" shape-rendering="crispEdges"/>
<line x1="221.5" y1="185.1" x2="232.1" y2="168.9" stroke="#fff" stroke-width="2" shape-rendering="crispEdges"/>
<line x1="233.3" y1="181.8" x2="239.2" y2="173.9" stroke="#fff" stroke-width="2" shape-rendering="crispEdges"/>
<line x1="239.6" y1="186.8" x2="246.0" y2="179.3" stroke="#fff" stroke-width="2" shape-rendering="crispEdges"/>
<line x1="245.6" y1="192.2" x2="252.4" y2="185.1" stroke="#fff" stroke-width="2" shape-rendering="crispEdges"/>
<line x1="251.2" y1="198.0" x2="258.4" y2="191.3" stroke="#fff" stroke-width="2" shape-rendering="crispEdges"/>
<line x1="256.4" y1="204.1" x2="264.1" y2="197.9" stroke="#fff" stroke-width="2" shape-rendering="crispEdges"/>
<line x1="261.3" y1="210.5" x2="269.3" y2="204.8" stroke="#fff" stroke-width="2" shape-rendering="crispEdges"/>
<line x1="265.8" y1="217.2" x2="274.1" y2="212.0" stroke="#fff" stroke-width="2" shape-rendering="crispEdges"/>
<line x1="269.8" y1="224.2" x2="278.4" y2="219.5" stroke="#fff" stroke-width="2" shape-rendering="crispEdges"/>
<line x1="273.4" y1="231.4" x2="282.3" y2="227.3" stroke="#fff" stroke-width="2" shape-rendering="crispEdges"/>
<line x1="267.6" y1="242.2" x2="285.6" y2="235.2" stroke="#fff" stroke-width="2" shape-rendering="crispEdges"/>
<line x1="279.2" y1="246.4" x2="288.5" y2="243.4" stroke="#fff" stroke-width="2" shape-rendering="crispEdges"/>
<line x1="281.3" y1="254.1" x2="290.9" y2="251.7" stroke="#fff" stroke-width="2" shape-rendering="crispEdges"/>
<line x1="283.0" y1="262.0" x2="292.7" y2="260.2" stroke="#fff" stroke-width="2" shape-rendering="crispEdges"/>
<line x1="284.3" y1="269.9" x2="294.0" y2="268.8" stroke="#fff" stroke-width="2" shape-rendering="crispEdges"/>
<line x1="285.0" y1="277.9" x2="294.8" y2="277.4" stroke="#fff" stroke-width="2" shape-rendering="crispEdges"/>
<polygon points="150,285 160,285 160,310 159,310 159,334 158,334 158,358 157,358 157,382 156,382 156,425 154,425 154,405 155,405 155,382 154,382 154,358 153,358 153,334 152,334 152,310 150,310" fill="#fff" shape-rendering="crispEdges"/>
<text x="154.5" y="393.6" font-size="13" fill="#ffffff" text-anchor="middle" stroke="#fff" stroke-width="0.4">0</text>
<text x="91.4" y="375.6" font-size="13" fill="#ffffff" text-anchor="middle" stroke="#fff" stroke-width="0.4">1</text>
<text x="50.6" y="324.3" font-size="13" fill="#ffffff" text-anchor="middle" stroke="#fff" stroke-width="0.4">2</text>
<text x="48.3" y="259.90000000000003" font-size="13" fill="#ffffff" text-anchor="middle" stroke="#fff" stroke-width="0.4">3</text>
<text x="87" y="208.1" font-size="13" fill="#ffffff" text-anchor="middle" stroke="#fff" stroke-width="0.4">4</text>
<text x="150.5" y="186.1" font-size="13" fill="#ffffff" text-anchor="middle" stroke="#fff" stroke-width="0.4">5</text>
<text x="216" y="203.2" font-size="13" fill="#ffffff" text-anchor="middle" stroke="#fff" stroke-width="0.4">6</text>
<text x="258.9" y="251.79999999999998" font-size="13" fill="#ffffff" text-anchor="middle" stroke="#fff" stroke-width="0.4">7</text>
</g>
<g id="settings-panel">
<g shape-rendering="crispEdges">
<rect x="308" y="158" width="228" height="1" fill="#808080"/>
<rect x="308" y="158" width="1" height="86" fill="#808080"/>
<rect x="308" y="244" width="229" height="1" fill="#ffffff"/>
<rect x="536" y="158" width="1" height="87" fill="#ffffff"/>
<rect x="309" y="159" width="226" height="1" fill="#ffffff"/>
<rect x="309" y="159" width="1" height="84" fill="#ffffff"/>
<rect x="309" y="243" width="227" height="1" fill="#808080"/>
<rect x="535" y="159" width="1" height="85" fill="#808080"/>
<rect x="315" y="156" width="97" height="6" fill="#c0c0c0"/>
</g>
<text x="318" y="163" font-size="13" fill="#000" textLength="91.5" lengthAdjust="spacingAndGlyphs" stroke="#000" stroke-width="0.22">Synchronisation sur</text>
<circle cx="323" cy="181" r="5.5" fill="#fff"/>
<path d="M318.9 185.1 A5.8 5.8 0 0 1 327.1 176.9" fill="none" stroke="#808080" stroke-width="1.2"/>
<path d="M318.9 185.1 A5.8 5.8 0 0 0 327.1 176.9" fill="none" stroke="#ffffff" stroke-width="1.2"/>
<path d="M319.6 184.4 A4.8 4.8 0 0 1 326.4 177.6" fill="none" stroke="#000" stroke-width="1.1"/>
<path d="M319.6 184.4 A4.8 4.8 0 0 0 326.4 177.6" fill="none" stroke="#c0c0c0" stroke-width="1.1"/>
<circle cx="323" cy="181" r="2" fill="#000"/>
<circle cx="417" cy="181" r="5.5" fill="#fff"/>
<path d="M412.9 185.1 A5.8 5.8 0 0 1 421.1 176.9" fill="none" stroke="#808080" stroke-width="1.2"/>
<path d="M412.9 185.1 A5.8 5.8 0 0 0 421.1 176.9" fill="none" stroke="#ffffff" stroke-width="1.2"/>
<path d="M413.6 184.4 A4.8 4.8 0 0 1 420.4 177.6" fill="none" stroke="#000" stroke-width="1.1"/>
<path d="M413.6 184.4 A4.8 4.8 0 0 0 420.4 177.6" fill="none" stroke="#c0c0c0" stroke-width="1.1"/>
<text x="334.7" y="185" font-size="13" fill="#000" textLength="65.3" lengthAdjust="spacingAndGlyphs" stroke="#000" stroke-width="0.22">Front Montant</text>
<text x="428.7" y="185" font-size="13" fill="#000" textLength="85" lengthAdjust="spacingAndGlyphs" stroke="#000" stroke-width="0.22">Front Descendant</text>
<text x="316.5" y="205" font-size="13" fill="#000" textLength="28" lengthAdjust="spacingAndGlyphs" stroke="#000" stroke-width="0.22">Seuil :</text>
<g shape-rendering="crispEdges">
<rect x="354" y="199" width="160" height="1" fill="#808080"/>
<rect x="354" y="200" width="160" height="1" fill="#000000"/>
<rect x="354" y="201" width="161" height="1" fill="#ffffff"/>
<rect x="354" y="202" width="161" height="1" fill="#ffffff"/>
<rect x="514" y="199" width="1" height="4" fill="#ffffff"/>
<rect x="355" y="206" width="1" height="3" fill="#000000"/>
<rect x="371" y="206" width="1" height="3" fill="#000000"/>
<rect x="386" y="206" width="1" height="3" fill="#000000"/>
<rect x="402" y="206" width="1" height="3" fill="#000000"/>
<rect x="418" y="206" width="1" height="3" fill="#000000"/>
<rect x="434" y="206" width="1" height="3" fill="#000000"/>
<rect x="450" y="206" width="1" height="3" fill="#000000"/>
<rect x="465" y="206" width="1" height="3" fill="#000000"/>
<rect x="481" y="206" width="1" height="3" fill="#000000"/>
<rect x="497" y="206" width="1" height="3" fill="#000000"/>
<rect x="513" y="206" width="1" height="3" fill="#000000"/>
<rect x="410" y="199" width="3" height="5" fill="#ffffff"/>
<rect x="412" y="199" width="1" height="5" fill="#000000"/>
<rect x="410" y="204" width="3" height="1" fill="#000000"/>
</g>
<text x="316.5" y="232" font-size="13" fill="#000" textLength="80.5" lengthAdjust="spacingAndGlyphs" stroke="#000" stroke-width="0.22">Nb impulsions/tr :</text>
<g shape-rendering="crispEdges">
<rect x="402" y="216" width="51" height="21" fill="#ffffff"/>
<rect x="402" y="216" width="50" height="1" fill="#808080"/>
<rect x="402" y="216" width="1" height="20" fill="#808080"/>
<rect x="403" y="217" width="48" height="1" fill="#000000"/>
<rect x="403" y="217" width="1" height="18" fill="#000000"/>
<rect x="402" y="236" width="51" height="1" fill="#ffffff"/>
<rect x="452" y="216" width="1" height="21" fill="#ffffff"/>
<rect x="403" y="235" width="49" height="1" fill="#c0c0c0"/>
<rect x="451" y="217" width="1" height="19" fill="#c0c0c0"/>
<rect x="435" y="218" width="16" height="17" fill="#c0c0c0"/>
<rect x="435" y="218" width="15" height="1" fill="#ffffff"/>
<rect x="435" y="218" width="1" height="16" fill="#ffffff"/>
<rect x="435" y="234" width="16" height="1" fill="#000000"/>
<rect x="450" y="218" width="1" height="17" fill="#000000"/>
<rect x="436" y="233" width="14" height="1" fill="#808080"/>
<rect x="449" y="219" width="1" height="15" fill="#808080"/>
<rect x="439" y="224" width="7" height="1" fill="#000000"/>
<rect x="440" y="225" width="5" height="1" fill="#000000"/>
<rect x="441" y="226" width="3" height="1" fill="#000000"/>
<rect x="442" y="227" width="1" height="1" fill="#000000"/>
</g>
<text x="406.7" y="231" font-size="13" fill="#000" textLength="14.5" lengthAdjust="spacingAndGlyphs" stroke="#000" stroke-width="0.22">0,5</text>
<text x="308" y="267" font-size="13" fill="#000" textLength="181" lengthAdjust="spacingAndGlyphs" stroke="#000" stroke-width="0.22">Selectionnez votre carte d'acquisition :</text>
<g shape-rendering="crispEdges">
<rect x="308" y="272" width="231" height="21" fill="#ffffff"/>
<rect x="308" y="272" width="230" height="1" fill="#808080"/>
<rect x="308" y="272" width="1" height="20" fill="#808080"/>
<rect x="309" y="273" width="228" height="1" fill="#000000"/>
<rect x="309" y="273" width="1" height="18" fill="#000000"/>
<rect x="308" y="292" width="231" height="1" fill="#ffffff"/>
<rect x="538" y="272" width="1" height="21" fill="#ffffff"/>
<rect x="309" y="291" width="229" height="1" fill="#c0c0c0"/>
<rect x="537" y="273" width="1" height="19" fill="#c0c0c0"/>
<rect x="521" y="274" width="16" height="17" fill="#c0c0c0"/>
<rect x="521" y="274" width="15" height="1" fill="#ffffff"/>
<rect x="521" y="274" width="1" height="16" fill="#ffffff"/>
<rect x="521" y="290" width="16" height="1" fill="#000000"/>
<rect x="536" y="274" width="1" height="17" fill="#000000"/>
<rect x="522" y="289" width="14" height="1" fill="#808080"/>
<rect x="535" y="275" width="1" height="15" fill="#808080"/>
<rect x="525" y="280" width="7" height="1" fill="#000000"/>
<rect x="526" y="281" width="5" height="1" fill="#000000"/>
<rect x="527" y="282" width="3" height="1" fill="#000000"/>
<rect x="528" y="283" width="1" height="1" fill="#000000"/>
</g>
<text x="311.5" y="286" font-size="13" fill="#000" textLength="135.5" lengthAdjust="spacingAndGlyphs" stroke="#000" stroke-width="0.22">Crystal Audio System Record</text>
<text x="310.8" y="311" font-size="13" fill="#000" textLength="45" lengthAdjust="spacingAndGlyphs" stroke="#000" stroke-width="0.22">Rpm Max</text>
<g shape-rendering="crispEdges">
<rect x="369" y="304" width="164" height="1" fill="#808080"/>
<rect x="369" y="305" width="164" height="1" fill="#000000"/>
<rect x="369" y="306" width="165" height="1" fill="#ffffff"/>
<rect x="533" y="304" width="1" height="3" fill="#ffffff"/>
<rect x="371" y="314" width="1" height="3" fill="#000000"/>
<rect x="387" y="314" width="1" height="3" fill="#000000"/>
<rect x="403" y="314" width="1" height="3" fill="#000000"/>
<rect x="419" y="314" width="1" height="3" fill="#000000"/>
<rect x="435" y="314" width="1" height="3" fill="#000000"/>
<rect x="452" y="314" width="1" height="3" fill="#000000"/>
<rect x="468" y="314" width="1" height="3" fill="#000000"/>
<rect x="484" y="314" width="1" height="3" fill="#000000"/>
<rect x="500" y="314" width="1" height="3" fill="#000000"/>
<rect x="516" y="314" width="1" height="3" fill="#000000"/>
<rect x="532" y="314" width="1" height="3" fill="#000000"/>
<rect x="490" y="302" width="5" height="9" fill="#c0c0c0"/>
<rect x="490" y="302" width="4" height="1" fill="#ffffff"/>
<rect x="490" y="302" width="1" height="9" fill="#ffffff"/>
<rect x="494" y="302" width="1" height="9" fill="#000000"/>
<rect x="493" y="303" width="1" height="8" fill="#808080"/>
<rect x="491" y="311" width="1" height="1" fill="#ffffff"/>
<rect x="492" y="311" width="1" height="1" fill="#808080"/>
<rect x="493" y="311" width="1" height="1" fill="#000000"/>
<rect x="492" y="312" width="1" height="1" fill="#000000"/>
</g>
<text x="310.8" y="329" font-size="13" fill="#000" textLength="34.5" lengthAdjust="spacingAndGlyphs" stroke="#000" stroke-width="0.22">Orange</text>
<g shape-rendering="crispEdges">
<rect x="369" y="322" width="164" height="1" fill="#808080"/>
<rect x="369" y="323" width="164" height="1" fill="#000000"/>
<rect x="369" y="324" width="165" height="1" fill="#ffffff"/>
<rect x="533" y="322" width="1" height="3" fill="#ffffff"/>
<rect x="371" y="332" width="1" height="3" fill="#000000"/>
<rect x="387" y="332" width="1" height="3" fill="#000000"/>
<rect x="403" y="332" width="1" height="3" fill="#000000"/>
<rect x="419" y="332" width="1" height="3" fill="#000000"/>
<rect x="435" y="332" width="1" height="3" fill="#000000"/>
<rect x="452" y="332" width="1" height="3" fill="#000000"/>
<rect x="468" y="332" width="1" height="3" fill="#000000"/>
<rect x="484" y="332" width="1" height="3" fill="#000000"/>
<rect x="500" y="332" width="1" height="3" fill="#000000"/>
<rect x="516" y="332" width="1" height="3" fill="#000000"/>
<rect x="532" y="332" width="1" height="3" fill="#000000"/>
<rect x="470" y="320" width="5" height="9" fill="#c0c0c0"/>
<rect x="470" y="320" width="4" height="1" fill="#ffffff"/>
<rect x="470" y="320" width="1" height="9" fill="#ffffff"/>
<rect x="474" y="320" width="1" height="9" fill="#000000"/>
<rect x="473" y="321" width="1" height="8" fill="#808080"/>
<rect x="471" y="329" width="1" height="1" fill="#ffffff"/>
<rect x="472" y="329" width="1" height="1" fill="#808080"/>
<rect x="473" y="329" width="1" height="1" fill="#000000"/>
<rect x="472" y="330" width="1" height="1" fill="#000000"/>
</g>
<text x="310.8" y="348" font-size="13" fill="#000" textLength="31" lengthAdjust="spacingAndGlyphs" stroke="#000" stroke-width="0.22">Rouge</text>
<g shape-rendering="crispEdges">
<rect x="369" y="340" width="164" height="1" fill="#808080"/>
<rect x="369" y="341" width="164" height="1" fill="#000000"/>
<rect x="369" y="342" width="165" height="1" fill="#ffffff"/>
<rect x="533" y="340" width="1" height="3" fill="#ffffff"/>
<rect x="371" y="350" width="1" height="3" fill="#000000"/>
<rect x="387" y="350" width="1" height="3" fill="#000000"/>
<rect x="403" y="350" width="1" height="3" fill="#000000"/>
<rect x="419" y="350" width="1" height="3" fill="#000000"/>
<rect x="435" y="350" width="1" height="3" fill="#000000"/>
<rect x="452" y="350" width="1" height="3" fill="#000000"/>
<rect x="468" y="350" width="1" height="3" fill="#000000"/>
<rect x="484" y="350" width="1" height="3" fill="#000000"/>
<rect x="500" y="350" width="1" height="3" fill="#000000"/>
<rect x="516" y="350" width="1" height="3" fill="#000000"/>
<rect x="532" y="350" width="1" height="3" fill="#000000"/>
<rect x="478" y="338" width="5" height="9" fill="#c0c0c0"/>
<rect x="478" y="338" width="4" height="1" fill="#ffffff"/>
<rect x="478" y="338" width="1" height="9" fill="#ffffff"/>
<rect x="482" y="338" width="1" height="9" fill="#000000"/>
<rect x="481" y="339" width="1" height="8" fill="#808080"/>
<rect x="479" y="347" width="1" height="1" fill="#ffffff"/>
<rect x="480" y="347" width="1" height="1" fill="#808080"/>
<rect x="481" y="347" width="1" height="1" fill="#000000"/>
<rect x="480" y="348" width="1" height="1" fill="#000000"/>
</g>
</g>
</g>
<g id="statusbar">
<g shape-rendering="crispEdges">
<rect x="4" y="439" width="604" height="1" fill="#808080"/>
<rect x="4" y="439" width="1" height="20" fill="#808080"/>
<rect x="4" y="459" width="591" height="1" fill="#ffffff"/>
<rect x="608" y="439" width="1" height="7" fill="#ffffff"/>
<rect x="596" y="458" width="1" height="1" fill="#ffffff"/>
<rect x="597" y="458" width="1" height="1" fill="#808080"/>
<rect x="598" y="458" width="1" height="1" fill="#808080"/>
<rect x="597" y="457" width="1" height="1" fill="#ffffff"/>
<rect x="598" y="457" width="1" height="1" fill="#808080"/>
<rect x="599" y="457" width="1" height="1" fill="#808080"/>
<rect x="598" y="456" width="1" height="1" fill="#ffffff"/>
<rect x="599" y="456" width="1" height="1" fill="#808080"/>
<rect x="600" y="456" width="1" height="1" fill="#808080"/>
<rect x="599" y="455" width="1" height="1" fill="#ffffff"/>
<rect x="600" y="455" width="1" height="1" fill="#808080"/>
<rect x="601" y="455" width="1" height="1" fill="#808080"/>
<rect x="600" y="454" width="1" height="1" fill="#ffffff"/>
<rect x="601" y="454" width="1" height="1" fill="#808080"/>
<rect x="602" y="454" width="1" height="1" fill="#808080"/>
<rect x="601" y="453" width="1" height="1" fill="#ffffff"/>
<rect x="602" y="453" width="1" height="1" fill="#808080"/>
<rect x="603" y="453" width="1" height="1" fill="#808080"/>
<rect x="602" y="452" width="1" height="1" fill="#ffffff"/>
<rect x="603" y="452" width="1" height="1" fill="#808080"/>
<rect x="604" y="452" width="1" height="1" fill="#808080"/>
<rect x="603" y="451" width="1" height="1" fill="#ffffff"/>
<rect x="604" y="451" width="1" height="1" fill="#808080"/>
<rect x="605" y="451" width="1" height="1" fill="#808080"/>
<rect x="604" y="450" width="1" height="1" fill="#ffffff"/>
<rect x="605" y="450" width="1" height="1" fill="#808080"/>
<rect x="606" y="450" width="1" height="1" fill="#808080"/>
<rect x="605" y="449" width="1" height="1" fill="#ffffff"/>
<rect x="606" y="449" width="1" height="1" fill="#808080"/>
<rect x="607" y="449" width="1" height="1" fill="#808080"/>
<rect x="606" y="448" width="1" height="1" fill="#ffffff"/>
<rect x="607" y="448" width="1" height="1" fill="#808080"/>
<rect x="607" y="447" width="1" height="1" fill="#ffffff"/>
<rect x="600" y="458" width="1" height="1" fill="#ffffff"/>
<rect x="601" y="458" width="1" height="1" fill="#808080"/>
<rect x="602" y="458" width="1" height="1" fill="#808080"/>
<rect x="601" y="457" width="1" height="1" fill="#ffffff"/>
<rect x="602" y="457" width="1" height="1" fill="#808080"/>
<rect x="603" y="457" width="1" height="1" fill="#808080"/>
<rect x="602" y="456" width="1" height="1" fill="#ffffff"/>
<rect x="603" y="456" width="1" height="1" fill="#808080"/>
<rect x="604" y="456" width="1" height="1" fill="#808080"/>
<rect x="603" y="455" width="1" height="1" fill="#ffffff"/>
<rect x="604" y="455" width="1" height="1" fill="#808080"/>
<rect x="605" y="455" width="1" height="1" fill="#808080"/>
<rect x="604" y="454" width="1" height="1" fill="#ffffff"/>
<rect x="605" y="454" width="1" height="1" fill="#808080"/>
<rect x="606" y="454" width="1" height="1" fill="#808080"/>
<rect x="605" y="453" width="1" height="1" fill="#ffffff"/>
<rect x="606" y="453" width="1" height="1" fill="#808080"/>
<rect x="607" y="453" width="1" height="1" fill="#808080"/>
<rect x="606" y="452" width="1" height="1" fill="#ffffff"/>
<rect x="607" y="452" width="1" height="1" fill="#808080"/>
<rect x="607" y="451" width="1" height="1" fill="#ffffff"/>
<rect x="604" y="458" width="1" height="1" fill="#ffffff"/>
<rect x="605" y="458" width="1" height="1" fill="#808080"/>
<rect x="606" y="458" width="1" height="1" fill="#808080"/>
<rect x="605" y="457" width="1" height="1" fill="#ffffff"/>
<rect x="606" y="457" width="1" height="1" fill="#808080"/>
<rect x="607" y="457" width="1" height="1" fill="#808080"/>
<rect x="606" y="456" width="1" height="1" fill="#ffffff"/>
<rect x="607" y="456" width="1" height="1" fill="#808080"/>
<rect x="607" y="455" width="1" height="1" fill="#ffffff"/>
</g>
<text x="7" y="453" font-size="12.5" fill="#000" font-family="'DejaVu Sans', sans-serif" textLength="198" lengthAdjust="spacingAndGlyphs" stroke="#000" stroke-width="0.22">Véhicule en cours : Elise 6852</text>
</g>
</svg></body></html>
